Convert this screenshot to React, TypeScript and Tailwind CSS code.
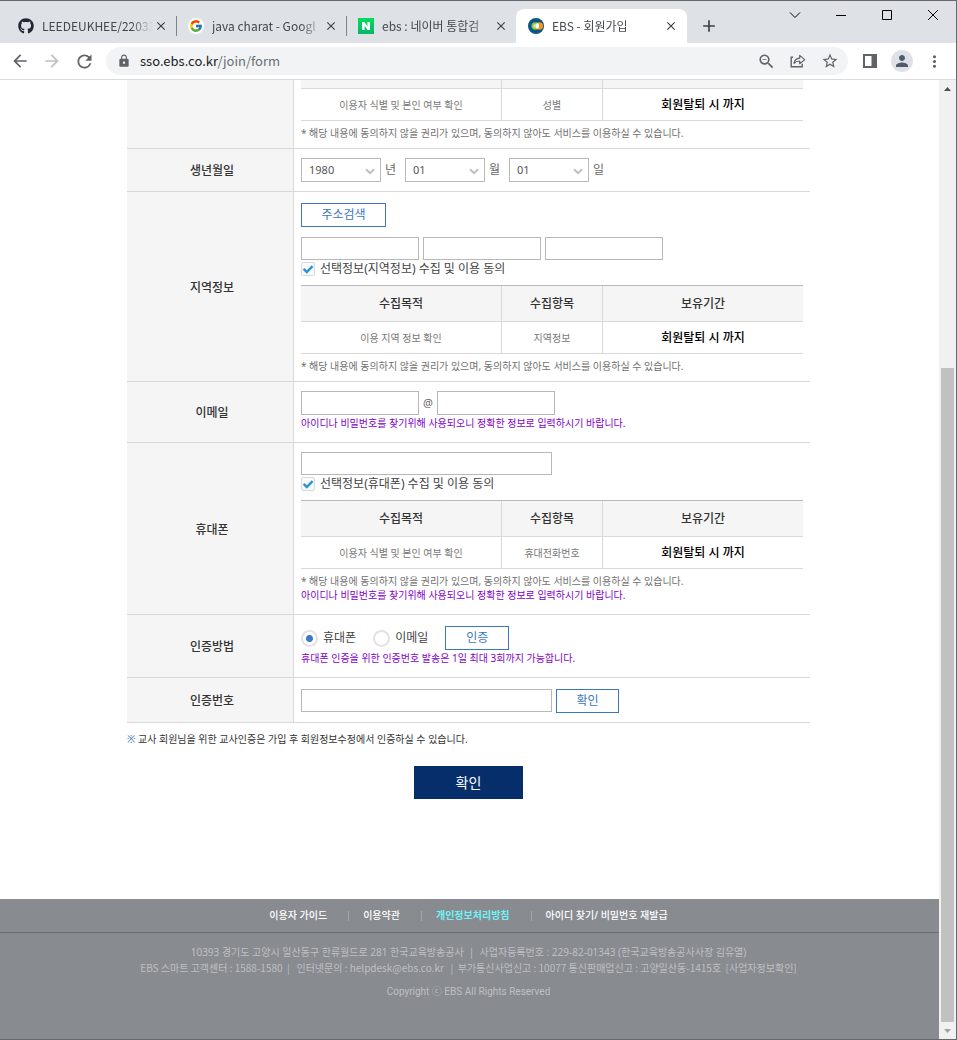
import { useState } from "react";
import type { ReactNode } from "react";
import { FaGithub } from "react-icons/fa";
import { FcGoogle } from "react-icons/fc";
import { SiNaver } from "react-icons/si";
import {
  MdAdd,
  MdArrowBack,
  MdArrowForward,
  MdClose,
  MdLock,
  MdMoreVert,
  MdPerson,
  MdRefresh,
  MdStarBorder,
  MdZoomOut,
} from "react-icons/md";

function EbsLogo() {
  return (
    <svg width="16" height="16" viewBox="0 0 16 16" aria-hidden="true">
      <circle cx="8" cy="8" r="8" fill="#0b5486" />
      <circle cx="11.4" cy="8" r="2.7" fill="#f7941d" stroke="#f7941d" strokeWidth="2" />
      <circle cx="7.2" cy="8" r="2.9" fill="#cfe6a0" stroke="#8dc63f" strokeWidth="1.8" />
      <ellipse cx="9.4" cy="8" rx="1.6" ry="2.9" fill="#fff" />
    </svg>
  );
}

function NaverLogo() {
  return (
    <span className="flex size-4 items-center justify-center bg-linear-to-b from-[#00de5a] to-[#05b56a]">
      <SiNaver size={8} color="#fff" />
    </span>
  );
}

function GoogleLogo() {
  return (
    <span className="flex size-4 items-center justify-center rounded-full bg-white">
      <FcGoogle size={14} />
    </span>
  );
}

const backgroundTabs = [
  { title: "LEEDEUKHEE/22033", icon: <FaGithub size={16} color="#24292f" />, divider: false },
  { title: "java charat - Googl", icon: <GoogleLogo />, divider: true },
  { title: "ebs : 네이버 통합검", icon: <NaverLogo />, divider: true },
];

function TabBody({ title, icon }: { title: string; icon: ReactNode }) {
  return (
    <>
      <span className="shrink-0">{icon}</span>
      <span className="ml-2 min-w-0 flex-1 overflow-hidden whitespace-nowrap mask-r-from-80% text-xs leading-5 text-[#45484c]">
        {title}
      </span>
      <button type="button" aria-label="탭 닫기" className="flex size-4 shrink-0 items-center justify-center">
        <MdClose size={14} color="#3c4043" />
      </button>
    </>
  );
}

function TabStrip() {
  return (
    <div className="flex h-[42px] bg-[#dee1e6] pl-1.5 font-['Noto_Sans_CJK_KR',sans-serif]">
      <div className="flex min-w-0 flex-1 items-end">
        {backgroundTabs.map((tab) => (
          <div key={tab.title} className="flex h-[34px] w-[170px] items-center">
            <span className={tab.divider ? "h-5 w-px bg-[#808388]" : "w-px"} />
            <div className="flex min-w-0 flex-1 items-center pr-[7px] pl-[11px]">
              <TabBody title={tab.title} icon={tab.icon} />
            </div>
          </div>
        ))}
        <div className="flex h-[34px] w-[171px] items-center rounded-t-lg bg-white pr-2 pl-3">
          <TabBody title="EBS - 회원가입" icon={<EbsLogo />} />
        </div>
        <button type="button" aria-label="새 탭" className="flex h-[34px] w-11 items-center justify-center">
          <MdAdd size={20} color="#3c4043" />
        </button>
      </div>
      <div className="flex h-7 text-black">
        <button type="button" aria-label="탭 검색" className="flex w-[46px] items-center justify-center">
          <svg width="12" height="12" viewBox="0 0 12 12" fill="none" stroke="currentColor">
            <path d="M1 3.5l5 5 5-5" />
          </svg>
        </button>
        <button type="button" aria-label="최소화" className="flex w-[46px] items-center justify-center">
          <svg width="10" height="10" viewBox="0 0 10 10" fill="none" stroke="currentColor">
            <path d="M0 5.5h10" />
          </svg>
        </button>
        <button type="button" aria-label="최대화" className="flex w-[46px] items-center justify-center">
          <svg width="10" height="10" viewBox="0 0 10 10" fill="none" stroke="currentColor">
            <path d="M.5.5h9v9h-9z" />
          </svg>
        </button>
        <button type="button" aria-label="닫기" className="flex w-[46px] items-center justify-center">
          <svg width="10" height="10" viewBox="0 0 10 10" fill="none" stroke="currentColor">
            <path d="M0 0l10 10M10 0L0 10" />
          </svg>
        </button>
      </div>
    </div>
  );
}

function IconCell({ label, children }: { label: string; children: ReactNode }) {
  return (
    <button type="button" aria-label={label} className="flex h-7 w-8 shrink-0 items-center justify-center text-[#5f6368]">
      {children}
    </button>
  );
}

function Toolbar() {
  return (
    <div className="flex h-[37px] items-center border-b border-[#dadbdd] bg-white pr-1.5 pl-1">
      <IconCell label="뒤로">
        <MdArrowBack size={20} />
      </IconCell>
      <IconCell label="앞으로">
        <MdArrowForward size={20} color="#bdc0c4" />
      </IconCell>
      <IconCell label="새로고침">
        <MdRefresh size={21} />
      </IconCell>
      <div className="mx-1.5 flex h-7 min-w-0 flex-1 items-center rounded-full bg-[#f1f3f4] pr-0.5 pl-[11px]">
        <MdLock size={14} color="#5f6368" />
        <div className="ml-[9px] flex-1 font-['Noto_Sans_CJK_KR',sans-serif] text-[13px] leading-5 text-[#202124]">
          sso.ebs.co.kr<span className="text-[#6b6f74]">/join/form</span>
        </div>
        <IconCell label="축소">
          <MdZoomOut size={19} />
        </IconCell>
        <IconCell label="공유">
          <svg width="16" height="16" viewBox="0 0 16 16" fill="none" stroke="currentColor" strokeWidth="1.4">
            <path d="M3 4.2H1.2v9.6h11v-3" />
            <path d="M4 10.4c.6-3.4 2.5-5 5.7-5.2V2.4l5 4.2-5 4.1V8C7.300 8 5.500 8.700 4 10.400z" strokeLinejoin="round" strokeWidth="1.2" />
          </svg>
        </IconCell>
        <IconCell label="북마크">
          <MdStarBorder size={18} />
        </IconCell>
      </div>
      <IconCell label="측면 패널">
        <svg width="14" height="14" viewBox="0 0 14 14">
          <path d="M0 0h14v14H0z" fill="#5f6368" />
          <path d="M2 2h6.500v10H2z" fill="#fff" />
        </svg>
      </IconCell>
      <IconCell label="프로필">
        <span className="flex size-[22px] items-center justify-center rounded-full bg-[#dee1e6]">
          <MdPerson size={18} color="#505a6e" />
        </span>
      </IconCell>
      <IconCell label="메뉴">
        <MdMoreVert size={19} />
      </IconCell>
    </div>
  );
}

function ScrollBar() {
  return (
    <div aria-hidden="true" className="flex w-[17px] shrink-0 flex-col items-center bg-[#f1f1f1]">
      <div className="flex h-[17px] items-center">
        <svg width="7" height="4" viewBox="0 0 7 4">
          <path d="M0 4L3.500 0 7 4z" fill="#505050" />
        </svg>
      </div>
      <div className="flex-[271]" />
      <div className="w-[13px] flex-[654] bg-[#c1c1c1]" />
      <div className="flex h-[17px] items-center">
        <svg width="7" height="4" viewBox="0 0 7 4">
          <path d="M0 0l3.500 4L7 0z" fill="#a3a3a3" />
        </svg>
      </div>
    </div>
  );
}

function FormRow({ label, pad, children }: { label: string; pad: string; children: ReactNode }) {
  return (
    <div className="flex border-b border-[#d9d9d9]">
      <div className="flex w-[167px] shrink-0 items-center justify-center border-r border-[#d9d9d9] bg-[#f5f5f5] pt-0.5 pl-1 text-xs font-medium text-[#333]">
        {label}
      </div>
      <div className={`min-w-0 flex-1 px-[7px] ${pad}`}>{children}</div>
    </div>
  );
}

function TextBox({ label, size }: { label: string; size: string }) {
  return <input type="text" aria-label={label} className={`block border border-[#b8b8b8] bg-white px-2 text-xs text-[#333] ${size}`} />;
}

function OutlineButton({ size, children }: { size: string; children: ReactNode }) {
  return (
    <button type="button" className={`flex h-6 items-center justify-center border border-[#3b78bb] bg-white text-xs text-[#3b78bb] ${size}`}>
      {children}
    </button>
  );
}

function DateSelect({ label, unit, options }: { label: string; unit: string; options: string[] }) {
  return (
    <div className="flex items-center gap-1 text-xs text-[#666]">
      <div className="relative">
        <select aria-label={label} className="block h-6 w-20 appearance-none border border-[#b8b8b8] bg-white pt-px pl-[7px] text-[11px] text-[#555]">
          {options.map((o) => (
            <option key={o}>{o}</option>
          ))}
        </select>
        <svg className="pointer-events-none absolute top-2.5 right-1.5" width="10" height="7" viewBox="0 0 10 7" fill="none" stroke="#bfbfbf" strokeWidth="2">
          <path d="M1 1.200l4 4 4-4" />
        </svg>
      </div>
      <span className="w-4">{unit}</span>
    </div>
  );
}

function ConsentCheck({ children }: { children: ReactNode }) {
  return (
    <label className="flex h-[17px] items-center text-xs leading-4 text-[#444]">
      <span className="relative mr-[5px] flex">
        <input type="checkbox" defaultChecked className="peer size-3.5 appearance-none rounded-xs border border-[#d9d9d9] bg-[#fafafa]" />
        <svg className="pointer-events-none absolute inset-0 hidden peer-checked:block" width="14" height="14" viewBox="0 0 14 14" fill="none" stroke="#2a93d5" strokeWidth="2.400">
          <path d="M2.600 6.800l3.200 3.200L11.600 4.200" />
        </svg>
      </span>
      {children}
    </label>
  );
}

function ConsentTable({ purpose, item }: { purpose: string; item: string }) {
  return (
    <table className="mt-2 w-full table-fixed border-separate border-spacing-0 border-t border-[#b8b8b8] text-center">
      <thead className="bg-[#f5f5f5] text-xs text-[#333]">
        <tr className="h-9">
          <th scope="col" className="w-[201px] border-r border-b border-[#d9d9d9] p-0 font-medium">수집목적</th>
          <th scope="col" className="w-[101px] border-r border-b border-[#d9d9d9] p-0 font-medium">수집항목</th>
          <th scope="col" className="border-b border-[#d9d9d9] p-0 font-medium">보유기간</th>
        </tr>
      </thead>
      <tbody>
        <ConsentCells purpose={purpose} item={item} />
      </tbody>
    </table>
  );
}

function ConsentCells({ purpose, item }: { purpose: string; item: string }) {
  return (
    <tr className="h-8">
      <td className="border-r border-b border-[#d9d9d9] p-0 text-[10px] leading-4 text-[#777]">{purpose}</td>
      <td className="border-r border-b border-[#d9d9d9] p-0 text-[10px] leading-4 text-[#777]">{item}</td>
      <td className="border-b border-[#d9d9d9] p-0 text-xs leading-4 font-medium text-black">회원탈퇴 시 까지</td>
    </tr>
  );
}

function ConsentNote() {
  return (
    <p className="pt-[5px] text-[10px] leading-[14px] whitespace-nowrap text-[#707070]">
      * 해당 내용에 동의하지 않을 권리가 있으며, 동의하지 않아도 서비스를 이용하실 수 있습니다.
    </p>
  );
}

function MethodRadio({ value, current, onPick, children }: { value: string; current: string; onPick: (v: string) => void; children: ReactNode }) {
  return (
    <label className="flex items-center gap-[5px] text-xs text-[#444]">
      <input
        type="radio"
        name="method"
        value={value}
        checked={current === value}
        onChange={() => onPick(value)}
        className="size-[17px] appearance-none rounded-full border-2 border-[#e3e3e3] bg-white bg-clip-padding checked:bg-[radial-gradient(circle,#3b78c8_3px,#fff_4px)]"
      />
      {children}
    </label>
  );
}

function JoinForm() {
  const [method, setMethod] = useState("phone");
  return (
    <form onSubmit={(e) => e.preventDefault()} className="mx-auto w-full max-w-[683px]">
      <FormRow label="" pad="pb-2">
        <table className="w-full table-fixed border-separate border-spacing-0 text-center">
          <thead className="bg-[#f5f5f5]">
            <tr className="h-[9px]">
              <th scope="col" aria-label="수집목적" className="w-[201px] border-r border-b border-[#d9d9d9] p-0" />
              <th scope="col" aria-label="수집항목" className="w-[101px] border-r border-b border-[#d9d9d9] p-0" />
              <th scope="col" aria-label="보유기간" className="border-b border-[#d9d9d9] p-0" />
            </tr>
          </thead>
          <tbody>
            <ConsentCells purpose="이용자 식별 및 본인 여부 확인" item="성별" />
          </tbody>
        </table>
        <ConsentNote />
      </FormRow>

      <FormRow label="생년월일" pad="py-[9px]">
        <div className="flex gap-1">
          <DateSelect label="년" unit="년" options={["1980", "1981", "1982"]} />
          <DateSelect label="월" unit="월" options={["01", "02", "03"]} />
          <DateSelect label="일" unit="일" options={["01", "02", "03"]} />
        </div>
      </FormRow>

      <FormRow label="지역정보" pad="pt-[11px] pb-2">
        <OutlineButton size="w-[85px]">주소검색</OutlineButton>
        <div className="mt-2.5 flex gap-1">
          <TextBox label="우편번호" size="h-[23px] w-[118px]" />
          <TextBox label="주소" size="h-[23px] w-[118px]" />
          <TextBox label="상세주소" size="h-[23px] w-[118px]" />
        </div>
        <ConsentCheck>선택정보(지역정보) 수집 및 이용 동의</ConsentCheck>
        <ConsentTable purpose="이용 지역 정보 확인" item="지역정보" />
        <ConsentNote />
      </FormRow>

      <FormRow label="이메일" pad="pt-[9px] pb-2.5">
        <div className="flex items-center text-[11px] text-[#666]">
          <TextBox label="이메일 아이디" size="h-6 w-[118px]" />
          <span className="w-[18px] text-center leading-4">@</span>
          <TextBox label="이메일 도메인" size="h-6 w-[118px]" />
        </div>
        <p className="text-[10px] leading-[17px] whitespace-nowrap text-[#8400c8]">
          아이디나 비밀번호를 찾기위해 사용되오니 정확한 정보로 입력하시기 바랍니다.
        </p>
      </FormRow>

      <FormRow label="휴대폰" pad="pt-[9px] pb-3">
        <TextBox label="휴대폰 번호" size="h-[23px] w-[251px]" />
        <ConsentCheck>선택정보(휴대폰) 수집 및 이용 동의</ConsentCheck>
        <ConsentTable purpose="이용자 식별 및 본인 여부 확인" item="휴대전화번호" />
        <ConsentNote />
        <p className="text-[10px] leading-[14px] whitespace-nowrap text-[#8400c8]">
          아이디나 비밀번호를 찾기위해 사용되오니 정확한 정보로 입력하시기 바랍니다.
        </p>
      </FormRow>

      <FormRow label="인증방법" pad="pt-[11px] pb-2.5">
        <div className="flex items-center gap-[17px]">
          <MethodRadio value="phone" current={method} onPick={setMethod}>휴대폰</MethodRadio>
          <MethodRadio value="email" current={method} onPick={setMethod}>이메일</MethodRadio>
          <OutlineButton size="w-16">인증</OutlineButton>
        </div>
        <p className="text-[10px] leading-[17px] whitespace-nowrap text-[#8400c8]">
          휴대폰 인증을 위한 인증번호 발송은 1일 최대 3회까지 가능합니다.
        </p>
      </FormRow>

      <FormRow label="인증번호" pad="pt-[11px] pb-[9px]">
        <div className="flex gap-1">
          <TextBox label="인증번호" size="h-[23px] w-[251px]" />
          <OutlineButton size="w-[63px]">확인</OutlineButton>
        </div>
      </FormRow>

      <p className="mt-2 text-[10px] leading-[17px] text-[#333]">
        <span className="text-[#3b78bb]">※</span> 교사 회원님을 위한 교사인증은 가입 후 회원정보수정에서 인증하실 수 있습니다.
      </p>
      <div className="mt-[18px] flex justify-center">
        <button type="submit" className="h-[33px] w-[109px] bg-[#052e6b] text-sm text-white">
          확인
        </button>
      </div>
    </form>
  );
}

function Footer() {
  return (
    <footer className="mt-[100px] flex-1 bg-[#888b90] text-[10px] whitespace-nowrap text-[#bfc0c2]">
      <nav className="flex h-[34px] items-center justify-center border-b border-[#6c6e72] pr-0.5 font-medium text-white">
        <a href="#guide">이용자 가이드</a>
        <span className="mr-3.5 ml-[21px] h-2.5 w-px bg-[#a5a7ab]" />
        <a href="#terms">이용약관</a>
        <span className="mr-3.5 ml-[21px] h-2.5 w-px bg-[#a5a7ab]" />
        <a href="#privacy" className="font-bold text-[#6ff3f7]">개인정보처리방침</a>
        <span className="mr-3.5 ml-[21px] h-2.5 w-px bg-[#a5a7ab]" />
        <a href="#find">아이디 찾기/ 비밀번호 재발급</a>
      </nav>
      <address className="mt-[11px] pr-0.5 text-center leading-4 not-italic">
        <p>10393 경기도 고양시 일산동구 한류월드로 281 한국교육방송공사 &nbsp;|&nbsp; 사업자등록번호 : 229-82-01343 (한국교육방송공사사장 김유열)</p>
        <p className="font-['Noto_Sans_CJK_KR',sans-serif]">
          EBS 스마트 고객센터 : 1588-1580 &nbsp;|&nbsp;&nbsp; 인터넷문의 : helpdesk@ebs.co.kr &nbsp;&nbsp;|&nbsp; 부가통신사업신고 : 10077 통신판매업신고 : 고양일산동-1415호 &nbsp;
          <a href="#business">[사업자정보확인]</a>
        </p>
      </address>
      <p className="mt-2 pr-0.5 text-center font-[Roboto,'Noto_Sans_CJK_KR',sans-serif] leading-4">Copyright ⓒ EBS All Rights Reserved</p>
    </footer>
  );
}

export default function App() {
  return (
    <div className="flex min-h-screen flex-col border-t border-r border-b border-[#67686b] bg-white font-['Noto_Sans','Noto_Sans_CJK_KR',sans-serif]">
      <TabStrip />
      <Toolbar />
      <div className="flex flex-1">
        <main className="flex min-w-0 flex-1 flex-col">
          <div className="pr-0.5">
            <JoinForm />
          </div>
          <Footer />
        </main>
        <ScrollBar />
      </div>
    </div>
  );
}
